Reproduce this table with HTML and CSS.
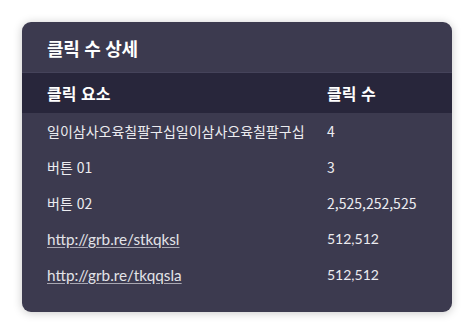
FILE: index.html
```html
<!DOCTYPE html>
<html lang="ko">
<head>
<meta charset="utf-8">
<link rel="stylesheet" href="styles.css">
</head>
<body>
<div class="card">
  <h2 class="title">클릭 수 상세</h2>
  <table class="table">
    <colgroup><col class="col-a"><col class="col-b"></colgroup>
    <thead>
      <tr><th>클릭 요소</th><th>클릭 수</th></tr>
    </thead>
    <tbody>
      <tr class="ko"><td>일이삼사오육칠팔구십일이삼사오육칠팔구십</td><td>4</td></tr>
      <tr class="ko"><td>버튼 01</td><td>3</td></tr>
      <tr class="ko"><td>버튼 02</td><td>2,525,252,525</td></tr>
      <tr class="en"><td><a class="link" href="#">http://grb.re/stkqksl</a></td><td>512,512</td></tr>
      <tr class="en"><td><a class="link" href="#">http://grb.re/tkqqsla</a></td><td>512,512</td></tr>
    </tbody>
  </table>
</div>
</body>
</html>
```
FILE: styles.css
```css
html, body { margin: 0; padding: 0; background: #ffffff; }
body { padding: 22px; font-family: Lato, "Noto Sans CJK KR", sans-serif; }
.card {
  width: 430px;
  height: 290px;
  box-sizing: border-box;
  background: #3c3a4f;
  border-radius: 9px;
  box-shadow: 0 1px 10px rgba(0,0,0,0.22);
  overflow: hidden;
  color: #ffffff;
}
.title {
  margin: 0;
  height: 50px;
  box-sizing: border-box;
  padding: 1px 25px 0;
  display: flex;
  align-items: center;
  font-family: "Noto Sans CJK KR", sans-serif;
  font-size: 18px;
  font-weight: 700;
  letter-spacing: -0.3px;
}
.table { width: 100%; border-collapse: collapse; table-layout: fixed; }
.col-a { width: 305px; }
.table thead tr { background: #28263b; height: 40px; border-top: 1px solid #45435a; }
.table th {
  text-align: left;
  font-family: "Noto Sans CJK KR", sans-serif;
  font-size: 16px;
  font-weight: 700;
  padding: 0;
  white-space: nowrap;
}
.table th:first-child, .table td:first-child { padding-left: 25px; }
.table td { padding: 0; height: 36px; font-size: 14px; color: #ececf0; white-space: nowrap; }
.ko td { font-family: "Noto Sans CJK KR", sans-serif; }
.en td { font-family: Lato, sans-serif; }
.en td .link { font-size: 15.3px; }
.link { color: #e3e3e8; text-decoration: underline; text-decoration-color: #a8a7b2; text-underline-offset: 2px; }
```
